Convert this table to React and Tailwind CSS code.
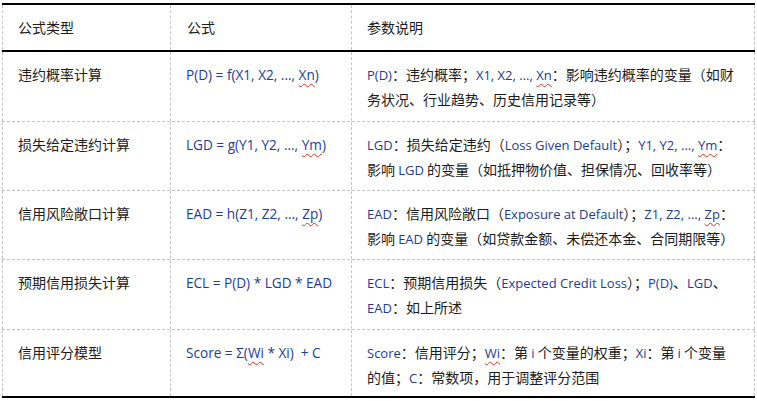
import React from "react";

const L = ({ children, w, big }) => (
  <span
    className={
      "text-[#1d3d94] font-['Open_Sans',sans-serif] " +
      (big ? "text-[13.6px] " : "text-[13px] ") +
      (w ? "underline decoration-wavy decoration-[#e0301e] decoration-1 underline-offset-[3px]" : "")
    }
  >
    {children}
  </span>
);

const rows = [
  {
    h: "h-[70px]",
    a: "违约概率计算",
    b: (
      <>
        P(D) = f(X1, X2, ..., <L w big>Xn</L>)
      </>
    ),
    c: [
      <>
        <L>P(D)</L>：违约概率；<L>X1, X2, ..., </L>
        <L w>Xn</L>：影响违约概率的变量（如财
      </>,
      <>务状况、行业趋势、历史信用记录等）</>,
    ],
  },
  {
    h: "h-[69px]",
    a: "损失给定违约计算",
    b: (
      <>
        LGD = g(Y1, Y2, ..., <L w big>Ym</L>)
      </>
    ),
    c: [
      <>
        <L>LGD</L>：损失给定违约（<L>Loss Given Default</L>）；
        <L>Y1, Y2, ..., </L>
        <L w>Ym</L>：
      </>,
      <>
        影响 <L>LGD</L> 的变量（如抵押物价值、担保情况、回收率等）
      </>,
    ],
  },
  {
    h: "h-[69px]",
    a: "信用风险敞口计算",
    b: (
      <>
        EAD = h(Z1, Z2, ..., <L w big>Zp</L>)
      </>
    ),
    c: [
      <>
        <L>EAD</L>：信用风险敞口（<L>Exposure at Default</L>）；
        <L>Z1, Z2, ..., </L>
        <L w>Zp</L>：
      </>,
      <>
        影响 <L>EAD</L> 的变量（如贷款金额、未偿还本金、合同期限等）
      </>,
    ],
  },
  {
    h: "h-[70px]",
    a: "预期信用损失计算",
    b: <>ECL = P(D) * LGD * EAD</>,
    c: [
      <>
        <L>ECL</L>：预期信用损失（<L>Expected Credit Loss</L>）；<L>P(D)</L>、
        <L>LGD</L>、
      </>,
      <>
        <L>EAD</L>：如上所述
      </>,
    ],
  },
  {
    h: "h-[68px]",
    a: "信用评分模型",
    b: (
      <>
        Score = Σ(<L w big>Wi</L> * Xi)  + C
      </>
    ),
    c: [
      <>
        <L>Score</L>：信用评分；<L w>Wi</L>：第 <L>i</L> 个变量的权重；<L>Xi</L>：第 <L>i</L>{" "}
        个变量
      </>,
      <>
        的值；<L>C</L>：常数项，用于调整评分范围
      </>,
    ],
    last: true,
  },
];

const cell = "border-l border-dashed border-[#c4c4c4]";

export default function App() {
  return (
    <div className="w-[757px] h-[401px] bg-white pl-[2px] pt-[3px] text-[14px] text-[#1c1c1c] font-['Noto_Sans_CJK_SC',sans-serif]">
      <div className="w-[753px] border-t-2 border-black">
        <div className="grid grid-cols-[168px_181px_404px] h-[47px] border-b-2 border-black">
          <div className={cell + " pl-[15px] flex items-center"}>公式类型</div>
          <div className={cell + " pl-[16px] flex items-center"}>公式</div>
          <div className={cell + " border-r pl-[15px] flex items-center"}>参数说明</div>
        </div>
        {rows.map((r, i) => (
          <div
            key={i}
            className={
              "grid grid-cols-[168px_181px_404px] " +
              r.h +
              " " +
              (r.last ? "border-b-2 border-black" : "border-b border-dashed border-[#c4c4c4]")
            }
          >
            <div className={cell + " pl-[15px] pt-[10px] leading-[24px]"}>{r.a}</div>
            <div className={cell + " pl-[15px] pt-[10px] leading-[24px] whitespace-pre"}>
              <L big>{r.b}</L>
            </div>
            <div className={cell + " border-r pl-[15px] pt-[10px] leading-[24px] whitespace-nowrap"}>
              <div>{r.c[0]}</div>
              <div>{r.c[1]}</div>
            </div>
          </div>
        ))}
      </div>
    </div>
  );
}
